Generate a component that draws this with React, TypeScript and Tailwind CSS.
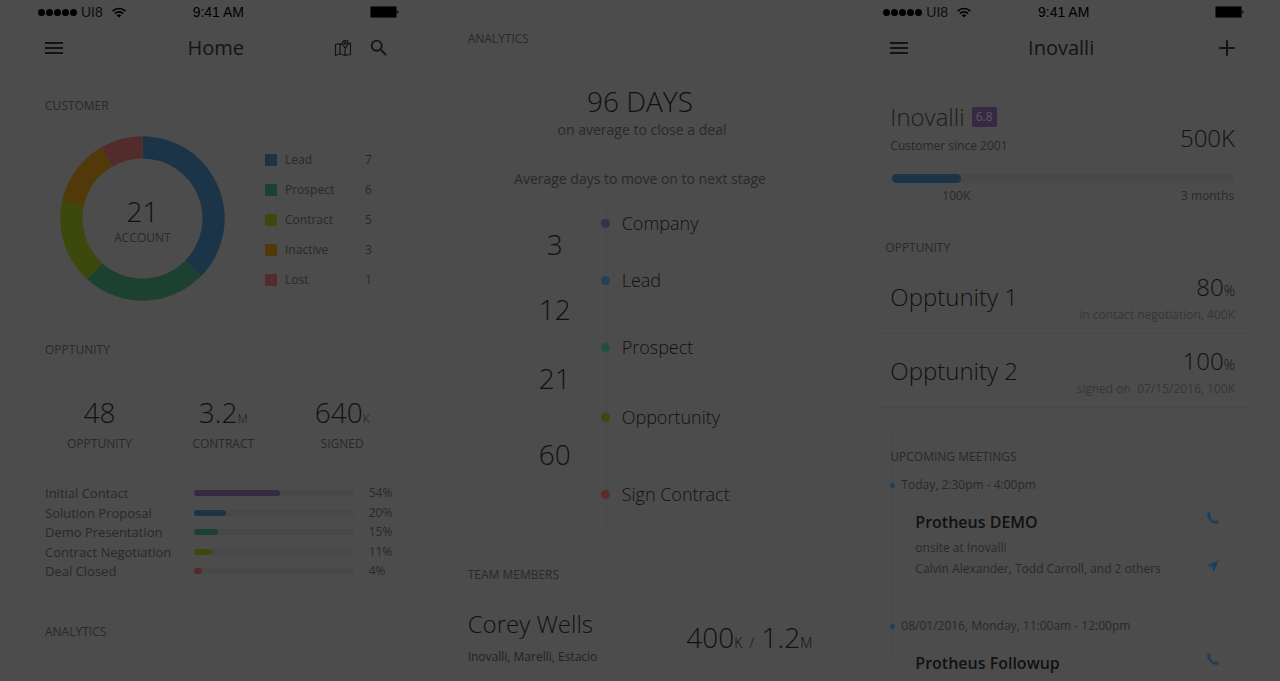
import type { ReactNode } from "react";
import { MdMenu, MdSearch } from "react-icons/md";

const segments = [
  { label: "Lead", value: 7, from: 0, to: 134.5, fill: "fill-[#1c3447]", swatch: "bg-[#1c3447]" },
  { label: "Prospect", value: 6, from: 134.5, to: 222.3, fill: "fill-[#1d4130]", swatch: "bg-[#1d4130]" },
  { label: "Contract", value: 5, from: 222.3, to: 282.7, fill: "fill-[#3c480c]", swatch: "bg-[#3c480c]" },
  { label: "Inactive", value: 3, from: 282.7, to: 330, fill: "fill-[#51390a]", swatch: "bg-[#51390a]" },
  { label: "Lost", value: 1, from: 330, to: 360, fill: "fill-[#522b2a]", swatch: "bg-[#522b2a]" },
];

const funnel = [
  { label: "Initial Contact", value: 54, bar: "bg-[#352a42]" },
  { label: "Solution Proposal", value: 20, bar: "bg-[#1c3447]" },
  { label: "Demo Presentation", value: 15, bar: "bg-[#1d4130]" },
  { label: "Contract Negotiation", value: 11, bar: "bg-[#3c480c]" },
  { label: "Deal Closed", value: 4, bar: "bg-[#522b2a]" },
];

const stages = [
  { label: "Company", dot: "bg-[#3a2f4a]", space: "" },
  { label: "Lead", dot: "bg-[#20415b]", space: "mt-[33px]" },
  { label: "Prospect", dot: "bg-[#22503b]", space: "mt-[43px]" },
  { label: "Opportunity", dot: "bg-[#3c480c]", space: "mt-[46px]" },
  { label: "Sign Contract", dot: "bg-[#5a2d2c]", space: "mt-[53px]" },
];

const stageDays = [
  { days: 3, space: "" },
  { days: 12, space: "mt-[33px]" },
  { days: 21, space: "mt-[37px]" },
  { days: 60, space: "mt-[44px]" },
];

function arc(from: number, to: number, outer: number, inner: number, c: number) {
  const point = (deg: number, r: number) => {
    const a = ((deg - 90) * Math.PI) / 180;
    return `${(c + r * Math.cos(a)).toFixed(2)} ${(c + r * Math.sin(a)).toFixed(2)}`;
  };
  const large = to - from > 180 ? 1 : 0;
  return `M${point(from, outer)}A${outer} ${outer} 0 ${large} 1 ${point(to, outer)}L${point(to, inner)}A${inner} ${inner} 0 ${large} 0 ${point(from, inner)}Z`;
}

function StatusBar() {
  return (
    <div className="grid h-6 grid-cols-[1fr_auto_1fr] items-center pl-2 pr-1.5 font-['Liberation_Sans',sans-serif] text-sm leading-6 text-black">
      <div className="flex items-center">
        <span className="flex gap-px">
          {[0, 1, 2, 3, 4].map((i) => (
            <i key={i} className="size-[7px] rounded-full bg-black" />
          ))}
        </span>
        <span className="ml-1 text-[#0c0c0c]">UI8</span>
        <svg viewBox="0 0 14 11" className="ml-[9px] h-[11px] w-[14px]" fill="none" stroke="#000" strokeWidth="1.7">
          <path d="M.6 4.1a9.2 9.2 0 0 1 12.8 0" />
          <path d="M2.9 6.6a5.9 5.9 0 0 1 8.2 0" />
          <path d="M7 10.6 4.7 8.3a3.3 3.3 0 0 1 4.6 0Z" fill="#000" stroke="none" />
        </svg>
      </div>
      <span>9:41 AM</span>
      <svg viewBox="0 0 29 12" className="h-3 w-[29px] justify-self-end">
        <rect x=".5" y=".5" width="26" height="11" rx="1" fill="#000" stroke="#222" />
        <path d="M27.3 4.2c1.5.3 1.5 3.3 0 3.6Z" fill="#000" />
      </svg>
    </div>
  );
}

function NavBar({ title, children }: { title: string; children: ReactNode }) {
  return (
    <header className="grid h-12 grid-cols-[1fr_auto_1fr] items-center pl-3 pr-[15px] text-[#141414]">
      <button type="button" aria-label="Menu" className="justify-self-start">
        <MdMenu className="size-6" />
      </button>
      <h1 className="text-xl leading-7">{title}</h1>
      <div className="flex items-center justify-self-end">{children}</div>
    </header>
  );
}

function SectionTitle({ children, className }: { children: ReactNode; className?: string }) {
  return <h2 className={`text-xs leading-4 text-[#292929] ${className ?? ""}`}>{children}</h2>;
}

function Stat({ value, unit, label }: { value: string; unit?: string; label: string }) {
  return (
    <div className="flex flex-col items-center">
      <span className="text-[28px] font-light leading-8 text-[#111]">
        {value}
        {unit && <span className="text-xs text-[#1c1c1c]">{unit}</span>}
      </span>
      <span className="mt-2 text-xs leading-4 text-[#292929]">{label}</span>
    </div>
  );
}

function HomeScreen() {
  return (
    <section>
      <StatusBar />
      <NavBar title="Home">
        <button type="button" aria-label="Map" className="mr-4">
          <svg viewBox="0 0 18 18" className="size-[18px]" fill="none" stroke="currentColor" strokeWidth="1.2">
            <path d="M8.2 5.6 6 4.6 1.500 5.500v11L6 14.800l5 1.700 5.500-1.200v-11l-2.400.5M6 4.600v10.200M11 10.500v6" />
            <path d="M11.3 9.300C10 7.300 8.500 5.600 8.500 4.200a2.800 2.800 0 0 1 5.600 0c0 1.400-1.500 3.100-2.800 5.100Z" />
            <circle cx="11.3" cy="4.2" r="1" />
          </svg>
        </button>
        <button type="button" aria-label="Search">
          <MdSearch className="size-[22px]" />
        </button>
      </NavBar>
      <div className="px-[15px]">
        <SectionTitle className="mt-[26px]">CUSTOMER</SectionTitle>
        <div className="mt-[22px] flex items-center pl-[15px]">
          <div className="grid size-[165px] place-items-center">
            <svg viewBox="0 0 165 165" className="col-start-1 row-start-1 size-[165px]">
              {segments.map((s) => (
                <path key={s.label} className={s.fill} d={arc(s.from, s.to, 82.2, 60, 82.5)} />
              ))}
            </svg>
            <div className="col-start-1 row-start-1 flex flex-col items-center pt-1">
              <span className="text-[28px] font-light leading-8 text-[#111]">21</span>
              <span className="mt-[3px] text-xs leading-4 text-[#292929]">ACCOUNT</span>
            </div>
          </div>
          <ul className="ml-10 mt-0.5 text-xs text-[#292929]">
            {segments.map((s) => (
              <li key={s.label} className="flex h-[30px] items-center">
                <i className={`mr-2 size-3 ${s.swatch}`} />
                <span className="w-20">{s.label}</span>
                <span>{s.value}</span>
              </li>
            ))}
          </ul>
        </div>
        <SectionTitle className="mt-[41px]">OPPTUNITY</SectionTitle>
        <div className="mt-[38px] flex justify-between pl-[22px] pr-5">
          <Stat value="48" label="OPPTUNITY" />
          <Stat value="3.2" unit="M" label="CONTRACT" />
          <Stat value="640" unit="K" label="SIGNED" />
        </div>
        <ul className="mt-[33px] flex h-[94px] flex-col justify-between text-xs leading-4 text-[#292929]">
          {funnel.map((f) => (
            <li key={f.label} className="flex items-center">
              <span className="w-[149px] text-[13px] leading-4">{f.label}</span>
              <span className="h-1.5 flex-1 rounded-full bg-[#46484a]">
                <i className={`block h-1.5 min-w-2 rounded-full ${f.bar}`} style={{ width: `${f.value}%` }} />
              </span>
              <span className="ml-[15px] w-[21px] whitespace-nowrap">{f.value}%</span>
            </li>
          ))}
        </ul>
        <SectionTitle className="mt-[45px]">ANALYTICS</SectionTitle>
      </div>
    </section>
  );
}

function AnalyticsScreen() {
  return (
    <section className="px-[15px]">
      <SectionTitle className="mt-[31px]">ANALYTICS</SectionTitle>
      <p className="mt-[38px] text-center text-[28px] font-light leading-8 text-[#111]">96 DAYS</p>
      <p className="mt-[3px] pl-1 text-center text-sm leading-5 text-[#292929]">on average to close a deal</p>
      <p className="mt-[29px] text-center text-sm leading-5 text-[#292929]">Average days to move on to next stage</p>
      <div className="relative mt-[19px] flex h-[323px] pl-[71px]">
        <div className="absolute left-[138px] top-0 h-full w-px bg-[#484848]" />
        <ol className="w-8 pt-5 text-center text-[28px] font-light leading-8 text-[#111]">
          {stageDays.map((d) => (
            <li key={d.days} className={d.space}>
              {d.days}
            </li>
          ))}
        </ol>
        <ol className="relative ml-[30px] pt-[3px] text-lg font-light leading-6 text-[#111]">
          {stages.map((s) => (
            <li key={s.label} className={`flex items-center gap-3 ${s.space}`}>
              <i className={`size-[9px] rounded-full ${s.dot}`} />
              {s.label}
            </li>
          ))}
        </ol>
      </div>
      <SectionTitle className="mt-9">TEAM MEMBERS</SectionTitle>
      <div className="mt-[25px] flex items-center justify-between">
        <div>
          <h3 className="text-2xl font-light leading-8 text-[#111]">Corey Wells</h3>
          <p className="mt-[9px] text-xs leading-4 text-[#222]">Inovalli, Marelli, Estacio</p>
        </div>
        <p className="text-[28px] font-light leading-8 text-[#111]">
          400<span className="text-sm">K&nbsp; /&nbsp; </span>1.2<span className="text-sm">M</span>
        </p>
      </div>
    </section>
  );
}

function Opportunity({ name, percent, note }: { name: string; percent: number; note: string }) {
  return (
    <li className="flex h-[74px] items-center justify-between border-b border-[#474747] px-[15px]">
      <h3 className="text-2xl font-light leading-8 text-[#111]">{name}</h3>
      <div className="text-right">
        <p className="text-2xl font-light leading-8 text-[#111]">
          {percent}
          <span className="text-sm">%</span>
        </p>
        <p className="mt-1 whitespace-pre text-xs leading-4 text-[#363636]">{note}</p>
      </div>
    </li>
  );
}

function PhoneIcon() {
  return (
    <svg viewBox="0 0 12 12" className="size-3" fill="#1f405c">
      <path d="M1.900.1C.8.4-.1 1.500.1 3.100c.3 2.200 1.600 4.500 3.300 6.100 1.800 1.700 4 2.700 6 2.700 1.100 0 2.100-.6 2.500-1.500.2-.4 0-.8-.4-1L9.200 8.300c-.4-.2-.8-.1-1.100.2l-.7.7c-.9-.4-1.700-1-2.400-1.700C4.300 6.800 3.600 6 3.200 5.100l.5-.8c.2-.3.3-.7.1-1.100L2.800.5c-.1-.3-.5-.5-.9-.4Z" />
    </svg>
  );
}

function When({ children }: { children: ReactNode }) {
  return (
    <p className="flex items-center text-xs leading-4 text-[#292929]">
      <i className="mr-1.5 size-[5px] rounded-full bg-[#1f405c]" />
      {children}
    </p>
  );
}

function AccountScreen() {
  return (
    <section>
      <StatusBar />
      <NavBar title="Inovalli">
        <button type="button" aria-label="Add">
          <svg viewBox="0 0 16 16" className="size-4" stroke="currentColor" strokeWidth="2" strokeLinecap="round">
            <path d="M8 1v14M1 8h14" />
          </svg>
        </button>
      </NavBar>
      <div className="mt-[29px] flex items-center justify-between px-[15px]">
        <div>
          <div className="flex items-center">
            <h2 className="text-2xl font-light leading-8 text-[#1c1c1c]">Inovalli</h2>
            <span className="ml-[7px] rounded-xs bg-[#352a42] px-1 text-xs leading-5 text-[#5a5660]">6.8</span>
          </div>
          <p className="mt-[5px] text-xs leading-4 text-[#292929]">Customer since 2001</p>
        </div>
        <p className="pt-[21px] text-2xl font-light leading-8 text-[#111]">500K</p>
      </div>
      <div className="mt-5 pl-[17px] pr-4">
        <div className="h-[9px] rounded-full bg-[#46484a]">
          <div className="h-[9px] w-1/5 rounded-full bg-[#1c3447]" />
        </div>
        <div className="mt-[5px] flex justify-between pl-[50px] text-xs leading-4 text-[#292929]">
          <span>100K</span>
          <span>3 months</span>
        </div>
      </div>
      <SectionTitle className="ml-2.5 mt-9">OPPTUNITY</SectionTitle>
      <ul className="mt-1">
        <Opportunity name="Opptunity 1" percent={80} note="in contact negotiation, 400K" />
        <Opportunity name="Opptunity 2" percent={100} note="signed on  07/15/2016, 100K" />
      </ul>
      <div className="relative mt-5 px-[15px] pt-[21px]">
        <div className="absolute left-[17px] top-0 h-[230px] w-px bg-[#484848]" />
        <div className="relative">
          <SectionTitle>UPCOMING MEETINGS</SectionTitle>
          <div className="mt-3">
            <When>Today, 2:30pm - 4:00pm</When>
          </div>
          <div className="mt-[17px] flex justify-between pl-[25px] pr-4">
            <div>
              <h3 className="text-base font-semibold leading-6 text-[#111]">Protheus DEMO</h3>
              <p className="mt-1.5 text-xs leading-4 text-[#292929]">onsite at Inovalli</p>
              <p className="mt-[5px] text-xs leading-4 text-[#292929]">Calvin Alexander, Todd Carroll, and 2 others</p>
            </div>
            <div className="flex flex-col gap-9 pt-0.5">
              <button type="button" aria-label="Call">
                <PhoneIcon />
              </button>
              <button type="button" aria-label="Directions">
                <svg viewBox="0 0 12 12" className="size-3" fill="#1f405c">
                  <path d="M12 0 0 5.400v.5L5.500 6.700 6 12h.5Z" />
                </svg>
              </button>
            </div>
          </div>
          <div className="mt-[41px]">
            <When>08/01/2016, Monday, 11:00am - 12:00pm</When>
          </div>
          <div className="mt-[17px] flex justify-between pl-[25px] pr-4">
            <h3 className="text-base font-semibold leading-6 text-[#111]">Protheus Followup</h3>
            <button type="button" aria-label="Call" className="self-start pt-0.5">
              <PhoneIcon />
            </button>
          </div>
        </div>
      </div>
    </section>
  );
}

export default function App() {
  return (
    <main className="grid min-h-screen grid-cols-3 gap-12 bg-[#4c4c4c] px-[30px] font-['Open_Sans','Noto_Sans',sans-serif]">
      <HomeScreen />
      <AnalyticsScreen />
      <AccountScreen />
    </main>
  );
}
